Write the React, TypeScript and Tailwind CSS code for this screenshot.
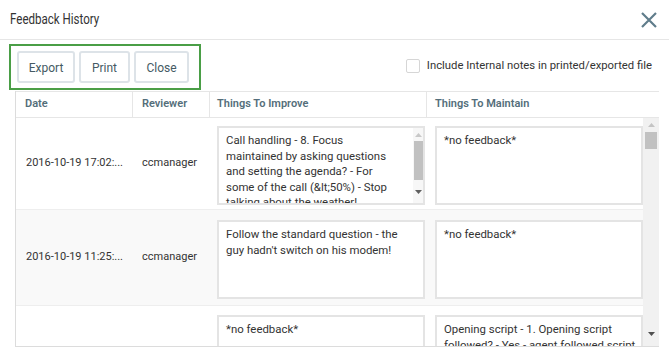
import React from "react";

interface FeedbackRow {
  id: string;
  date: string;
  reviewer: string;
  improve: string[];
  maintain: string[];
  improveScroll?: boolean;
  height: string;
  pad: string;
  striped?: boolean;
}

const rows: FeedbackRow[] = [
  {
    id: "r1",
    date: "2016-10-19 17:02:...",
    reviewer: "ccmanager",
    improve: [
      "Call handling - 8. Focus",
      "maintained by asking questions",
      "and setting the agenda? - For",
      "some of the call (&lt;50%) - Stop",
      "talking about the weather!",
    ],
    maintain: ["*no feedback*"],
    improveScroll: true,
    height: "h-[92px]",
    pad: "pt-[8px]",
  },
  {
    id: "r2",
    date: "2016-10-19 11:25:...",
    reviewer: "ccmanager",
    improve: ["Follow the standard question - the", "guy hadn't switch on his modem!"],
    maintain: ["*no feedback*"],
    height: "h-[96px]",
    pad: "pt-[10px]",
    striped: true,
  },
  {
    id: "r3",
    date: "",
    reviewer: "",
    improve: ["*no feedback*"],
    maintain: ["Opening script - 1. Opening script", "followed? - Yes - agent followed script"],
    height: "h-[96px]",
    pad: "pt-[9px]",
  },
];

function Arrow({ up, color }: { up?: boolean; color: string }) {
  return (
    <svg width="7" height="4" viewBox="0 0 7 4">
      <path d={up ? "M0 4 L3.5 0 L7 4 Z" : "M0 0 L3.5 4 L7 0 Z"} fill={color} />
    </svg>
  );
}

function MiniScroll() {
  return (
    <div className="flex w-[10px] flex-col items-center bg-[#f7f7f7]">
      <div className="flex h-[13px] items-center justify-center">
        <Arrow up color="#c8c8c8" />
      </div>
      <div className="h-[39px] w-[9px] bg-[#c1c1c1]" />
      <div className="flex flex-1 items-center justify-center">
        <Arrow color="#606060" />
      </div>
    </div>
  );
}

function TextBox({ lines, scroll }: { lines: string[]; scroll?: boolean }) {
  return (
    <div className="flex h-[79px] w-[208px] overflow-hidden border-2 border-[#e4e4e4] bg-white">
      <div className="flex-1 overflow-hidden pl-[7px] pt-[5px] text-[11.4px] leading-[15.5px] text-[#333]">
        {lines.map((line) => (
          <div key={line} className="whitespace-nowrap">
            {line}
          </div>
        ))}
      </div>
      {scroll && <MiniScroll />}
    </div>
  );
}

export default function App() {
  return (
    <div className="h-[356px] w-[669px] overflow-hidden bg-white font-['Roboto',sans-serif]">
      <div className="flex h-[40px] items-center justify-between border-b border-[#e6e6e6] pl-[10px] pr-[12px]">
        <span className="origin-left scale-x-[0.77] text-[15px] text-[#333]">Feedback History</span>
        <svg width="16" height="16" viewBox="0 0 16 16">
          <path d="M1 1 L15 15 M15 1 L1 15" stroke="#607d8b" strokeWidth="2.2" />
        </svg>
      </div>

      <div className="flex h-[51px] items-start justify-between pl-[9px] pr-[17px] pt-[4px]">
        <div className="flex h-[46px] w-[192px] gap-[4px] border-2 border-[#4a9e46] pl-[6px] pt-[5px]">
          {["Export", "Print", "Close"].map((label, i) => (
            <button
              key={label}
              className={`h-[32px] rounded-[3px] border-2 border-[#dde3e8] bg-white pt-[2px] text-[12px] text-[#455a64] ${
                i === 0 ? "w-[58px]" : i === 1 ? "w-[51px]" : "w-[55px]"
              }`}
            >
              {label}
            </button>
          ))}
        </div>
        <label className="mt-[14px] flex items-center gap-[7px] text-[11.3px] text-[#333]">
          <span className="h-[14px] w-[14px] rounded-[2px] border border-[#d6d6d6] bg-white" />
          Include Internal notes in printed/exported file
        </label>
      </div>

      <div className="ml-[15px] mr-[10px] border-l border-[#dcdcdc]">
        <div className="flex h-[27px] border-y border-[#e6e6e6] text-[11px] font-semibold text-[#546e7a]">
          <div className="flex w-[117px] items-center border-r border-[#e6e6e6] pl-[9px]">Date</div>
          <div className="flex w-[77px] items-center border-r border-[#e6e6e6] pl-[9px]">Reviewer</div>
          <div className="flex w-[217px] items-center border-r border-[#e6e6e6] pl-[7px]">Things To Improve</div>
          <div className="flex flex-1 items-center pl-[8px]">Things To Maintain</div>
        </div>

        <div className="flex h-[229px] border-b border-[#dcdcdc]">
          <div className="flex-1 overflow-hidden">
            {rows.map((row) => (
              <div
                key={row.id}
                className={`flex shrink-0 border-b border-[#eeeeee] text-[11px] text-[#333] ${row.height} ${
                  row.striped ? "bg-[#f9f9f9]" : "bg-white"
                }`}
              >
                <div className="flex w-[117px] items-center pl-[10px]">{row.date}</div>
                <div className="flex w-[77px] items-center pl-[9px]">{row.reviewer}</div>
                <div className={`w-[217px] pl-[7px] ${row.pad}`}>
                  <TextBox lines={row.improve} scroll={row.improveScroll} />
                </div>
                <div className={`w-[216px] pl-[8px] ${row.pad}`}>
                  <TextBox lines={row.maintain} />
                </div>
              </div>
            ))}
          </div>
          <div className="flex w-[16px] flex-col items-center bg-[#f1f1f1]">
            <div className="flex h-[14px] items-center justify-center">
              <Arrow up color="#c4c4c4" />
            </div>
            <div className="h-[17px] w-[12px] bg-[#c1c1c1]" />
            <div className="flex-1" />
            <div className="flex h-[24px] items-center justify-center">
              <Arrow color="#505050" />
            </div>
          </div>
        </div>
      </div>
    </div>
  );
}
